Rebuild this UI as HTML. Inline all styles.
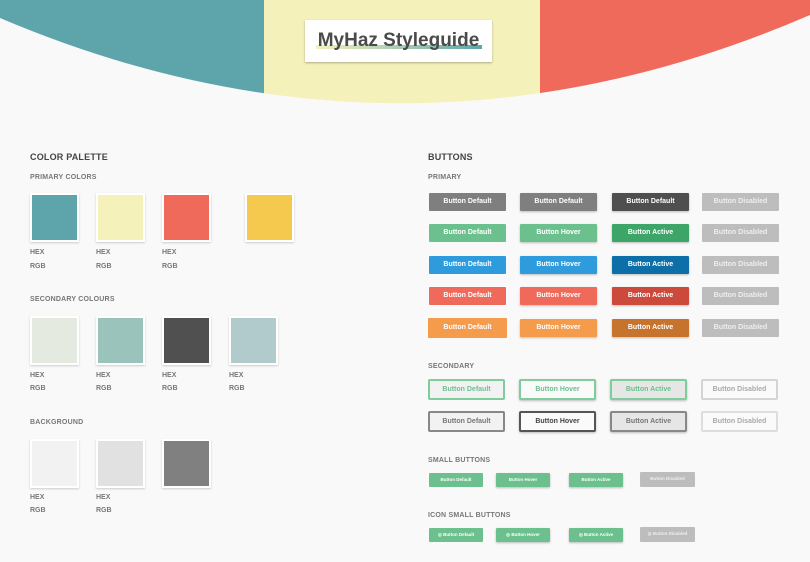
<!DOCTYPE html>
<html><head><style>
*{margin:0;padding:0;box-sizing:border-box}
body{width:810px;height:562px;background:#f9f9f9;position:relative;overflow:hidden;font-family:"Liberation Sans",sans-serif}
.a{position:absolute}
.h1{font-size:9px;font-weight:bold;color:#444;letter-spacing:.2px}
.h2{font-size:7px;font-weight:bold;color:#777;letter-spacing:.2px}
.lb{font-size:7px;font-weight:bold;color:#777}
.sw{width:49px;height:49px;background:#fff;padding:2px;box-shadow:0 1px 2px rgba(0,0,0,.18)}
.sw div{width:100%;height:100%}
.b{width:77px;height:18px;color:#fff;font-size:7px;font-weight:bold;text-align:center;line-height:18px;border-radius:1px}
.s{width:77px;height:21px;font-size:7px;font-weight:bold;text-align:center;line-height:17px;border:2px solid;border-radius:2px}
.sm{width:54px;height:14px;background:#6cc08e;color:#fff;font-size:4.5px;font-weight:bold;text-align:center;line-height:14px;border-radius:1px}
.sh{box-shadow:0 1px 2px rgba(0,0,0,.25)}
</style></head><body>
<svg class="a" style="left:0;top:0" width="810" height="110">
<defs><clipPath id="c"><path d="M0,0 H810 V15 Q405,190 0,18 Z"/></clipPath></defs>
<g clip-path="url(#c)"><rect x="0" y="0" width="264" height="110" fill="#5ea5ab"/><rect x="264" y="0" width="276" height="110" fill="#f4f1bb"/><rect x="540" y="0" width="270" height="110" fill="#ef6a5b"/></g>
</svg>
<div class="a" style="left:305px;top:20px;width:187px;height:42px;background:#fff;box-shadow:0 1px 2px rgba(0,0,0,.3)"></div>
<div class="a" style="left:316px;top:45px;width:166px;height:4px;background:linear-gradient(90deg,#f4f1bb,#5ea5ab)"></div>
<div class="a" style="left:305px;top:30px;width:187px;text-align:center;font-size:19px;font-weight:bold;color:#4a4a4a;letter-spacing:0px">MyHaz Styleguide</div>

<div class="a h1" style="left:30px;top:152px">COLOR PALETTE</div>
<div class="a h2" style="left:30px;top:174px">PRIMARY COLORS</div>
<div class="a sw" style="left:30px;top:193px"><div style="background:#5ea5ab"></div></div>
<div class="a sw" style="left:96px;top:193px"><div style="background:#f4f1bb"></div></div>
<div class="a sw" style="left:162px;top:193px"><div style="background:#ef6a5b"></div></div>
<div class="a sw" style="left:245px;top:193px"><div style="background:#f4c94e"></div></div>
<div class="a lb" style="left:30px;top:249px">HEX</div><div class="a lb" style="left:30px;top:263px">RGB</div>
<div class="a lb" style="left:96px;top:249px">HEX</div><div class="a lb" style="left:96px;top:263px">RGB</div>
<div class="a lb" style="left:162px;top:249px">HEX</div><div class="a lb" style="left:162px;top:263px">RGB</div>

<div class="a h2" style="left:30px;top:296px">SECONDARY COLOURS</div>
<div class="a sw" style="left:30px;top:316px"><div style="background:#e5eae1"></div></div>
<div class="a sw" style="left:96px;top:316px"><div style="background:#9ac3bc"></div></div>
<div class="a sw" style="left:162px;top:316px"><div style="background:#505050"></div></div>
<div class="a sw" style="left:229px;top:316px"><div style="background:#b1cbcd"></div></div>
<div class="a lb" style="left:30px;top:372px">HEX</div><div class="a lb" style="left:30px;top:385px">RGB</div>
<div class="a lb" style="left:96px;top:372px">HEX</div><div class="a lb" style="left:96px;top:385px">RGB</div>
<div class="a lb" style="left:162px;top:372px">HEX</div><div class="a lb" style="left:162px;top:385px">RGB</div>
<div class="a lb" style="left:229px;top:372px">HEX</div><div class="a lb" style="left:229px;top:385px">RGB</div>

<div class="a h2" style="left:30px;top:419px">BACKGROUND</div>
<div class="a sw" style="left:30px;top:439px"><div style="background:#f2f2f2"></div></div>
<div class="a sw" style="left:96px;top:439px"><div style="background:#e1e1e1"></div></div>
<div class="a sw" style="left:162px;top:439px"><div style="background:#808080"></div></div>
<div class="a lb" style="left:30px;top:494px">HEX</div><div class="a lb" style="left:30px;top:507px">RGB</div>
<div class="a lb" style="left:96px;top:494px">HEX</div><div class="a lb" style="left:96px;top:507px">RGB</div>

<div class="a h1" style="left:428px;top:152px">BUTTONS</div>
<div class="a h2" style="left:428px;top:174px">PRIMARY</div>

<div class="a b" style="left:429px;top:193px;background:#7f7f7f">Button Default</div>
<div class="a b sh" style="left:520px;top:193px;background:#7f7f7f">Button Default</div>
<div class="a b sh" style="left:612px;top:193px;background:#4f4f4f">Button Default</div>
<div class="a b" style="left:702px;top:193px;background:#bdbdbd;color:#eee">Button Disabled</div>

<div class="a b" style="left:429px;top:224px;background:#6cc08e">Button Default</div>
<div class="a b sh" style="left:520px;top:224px;background:#6cc08e">Button Hover</div>
<div class="a b sh" style="left:612px;top:224px;background:#3ca567">Button Active</div>
<div class="a b" style="left:702px;top:224px;background:#bdbdbd;color:#eee">Button Disabled</div>

<div class="a b" style="left:429px;top:256px;background:#2d9bdc">Button Default</div>
<div class="a b sh" style="left:520px;top:256px;background:#2d9bdc">Button Hover</div>
<div class="a b sh" style="left:612px;top:256px;background:#0d6fa8">Button Active</div>
<div class="a b" style="left:702px;top:256px;background:#bdbdbd;color:#eee">Button Disabled</div>

<div class="a b" style="left:429px;top:287px;background:#ef6a5b">Button Default</div>
<div class="a b sh" style="left:520px;top:287px;background:#ef6a5b">Button Hover</div>
<div class="a b sh" style="left:612px;top:287px;background:#cc4a3c">Button Active</div>
<div class="a b" style="left:702px;top:287px;background:#bdbdbd;color:#eee">Button Disabled</div>

<div class="a b" style="left:428px;top:318px;width:79px;height:20px;line-height:20px;background:#f49b4c">Button Default</div>
<div class="a b sh" style="left:520px;top:319px;background:#f49b4c">Button Hover</div>
<div class="a b sh" style="left:612px;top:319px;background:#c6732e">Button Active</div>
<div class="a b" style="left:702px;top:319px;background:#bdbdbd;color:#eee">Button Disabled</div>

<div class="a h2" style="left:428px;top:363px">SECONDARY</div>
<div class="a s" style="left:428px;top:379px;border-color:#7fcc9c;background:#f2f2f2;color:#6cc08e">Button Default</div>
<div class="a s sh" style="left:519px;top:379px;border-color:#7fcc9c;background:#fafafa;color:#6cc08e">Button Hover</div>
<div class="a s sh" style="left:610px;top:379px;border-color:#7fcc9c;background:#e6e6e6;color:#6cc08e">Button Active</div>
<div class="a s" style="left:701px;top:379px;border-color:#d4d4d4;background:#fafafa;color:#aaa">Button Disabled</div>
<div class="a s" style="left:428px;top:411px;border-color:#888;background:#f2f2f2;color:#777">Button Default</div>
<div class="a s sh" style="left:519px;top:411px;border-color:#555;background:#fafafa;color:#444">Button Hover</div>
<div class="a s sh" style="left:610px;top:411px;border-color:#888;background:#e6e6e6;color:#777">Button Active</div>
<div class="a s" style="left:701px;top:411px;border-color:#ddd;background:#fafafa;color:#aaa">Button Disabled</div>

<div class="a h2" style="left:428px;top:457px">SMALL BUTTONS</div>
<div class="a sm" style="left:429px;top:473px">Button Default</div>
<div class="a sm sh" style="left:496px;top:473px">Button Hover</div>
<div class="a sm sh" style="left:569px;top:473px">Button Active</div>
<div class="a sm" style="left:640px;top:472px;width:55px;height:15px;background:#bdbdbd;color:#eee">Button Disabled</div>

<div class="a h2" style="left:428px;top:512px">ICON SMALL BUTTONS</div>
<div class="a sm" style="left:429px;top:528px">◎ Button Default</div>
<div class="a sm sh" style="left:496px;top:528px">◎ Button Hover</div>
<div class="a sm sh" style="left:569px;top:528px">◎ Button Active</div>
<div class="a sm" style="left:640px;top:527px;width:55px;height:15px;background:#bdbdbd;color:#eee">◎ Button Disabled</div>
</body></html>
